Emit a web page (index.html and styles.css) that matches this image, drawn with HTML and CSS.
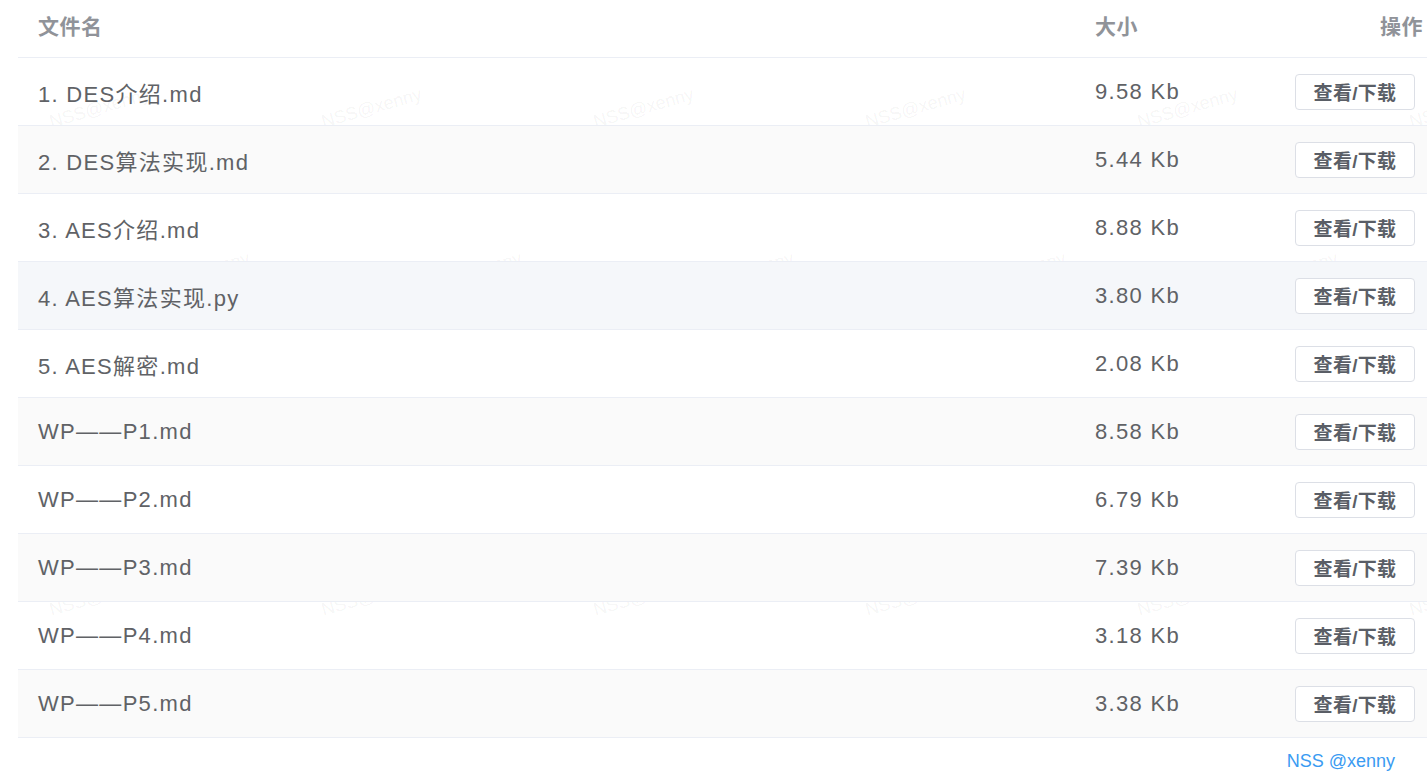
FILE: index.html
```html
<!DOCTYPE html>
<html lang="zh-CN">
<head>
<meta charset="utf-8">
<title>文件列表</title>
<link rel="stylesheet" href="styles.css">
</head>
<body>
<div class="page">
  <div class="watermarks" aria-hidden="true">
    <span class="wm" style="left:50px;top:112px">NSS@xenny</span>
    <span class="wm" style="left:322px;top:112px">NSS@xenny</span>
    <span class="wm" style="left:594px;top:112px">NSS@xenny</span>
    <span class="wm" style="left:866px;top:112px">NSS@xenny</span>
    <span class="wm" style="left:1138px;top:112px">NSS@xenny</span>
    <span class="wm" style="left:1410px;top:112px">NSS@xenny</span>
    <span class="wm" style="left:150px;top:276px">NSS@xenny</span>
    <span class="wm" style="left:422px;top:276px">NSS@xenny</span>
    <span class="wm" style="left:694px;top:276px">NSS@xenny</span>
    <span class="wm" style="left:966px;top:276px">NSS@xenny</span>
    <span class="wm" style="left:1238px;top:276px">NSS@xenny</span>
    <span class="wm" style="left:50px;top:600px">NSS@xenny</span>
    <span class="wm" style="left:322px;top:600px">NSS@xenny</span>
    <span class="wm" style="left:594px;top:600px">NSS@xenny</span>
    <span class="wm" style="left:866px;top:600px">NSS@xenny</span>
    <span class="wm" style="left:1138px;top:600px">NSS@xenny</span>
    <span class="wm" style="left:1410px;top:600px">NSS@xenny</span>
  </div>

  <div class="table">
    <div class="row head">
      <div class="cell">文件名</div>
      <div class="cell">大小</div>
      <div class="cell op-head">操作</div>
    </div>

    <div class="row">
      <div class="cell">1. DES介绍.md</div>
      <div class="cell">9.58 Kb</div>
      <div class="cell"><button class="btn">查看/下载</button></div>
    </div>
    <div class="row stripe">
      <div class="cell">2. DES算法实现.md</div>
      <div class="cell">5.44 Kb</div>
      <div class="cell"><button class="btn">查看/下载</button></div>
    </div>
    <div class="row">
      <div class="cell">3. AES介绍.md</div>
      <div class="cell">8.88 Kb</div>
      <div class="cell"><button class="btn">查看/下载</button></div>
    </div>
    <div class="row hover">
      <div class="cell">4. AES算法实现.py</div>
      <div class="cell">3.80 Kb</div>
      <div class="cell"><button class="btn">查看/下载</button></div>
    </div>
    <div class="row">
      <div class="cell">5. AES解密.md</div>
      <div class="cell">2.08 Kb</div>
      <div class="cell"><button class="btn">查看/下载</button></div>
    </div>
    <div class="row stripe">
      <div class="cell">WP——P1.md</div>
      <div class="cell">8.58 Kb</div>
      <div class="cell"><button class="btn">查看/下载</button></div>
    </div>
    <div class="row">
      <div class="cell">WP——P2.md</div>
      <div class="cell">6.79 Kb</div>
      <div class="cell"><button class="btn">查看/下载</button></div>
    </div>
    <div class="row stripe">
      <div class="cell">WP——P3.md</div>
      <div class="cell">7.39 Kb</div>
      <div class="cell"><button class="btn">查看/下载</button></div>
    </div>
    <div class="row">
      <div class="cell">WP——P4.md</div>
      <div class="cell">3.18 Kb</div>
      <div class="cell"><button class="btn">查看/下载</button></div>
    </div>
    <div class="row stripe">
      <div class="cell">WP——P5.md</div>
      <div class="cell">3.38 Kb</div>
      <div class="cell"><button class="btn">查看/下载</button></div>
    </div>
  </div>

  <div class="footer">NSS @xenny</div>
</div>
</body>
</html>
```

FILE: styles.css
```css
html, body {
  margin: 0;
  padding: 0;
  background: #ffffff;
}

body {
  font-family: "Liberation Sans", "Noto Sans CJK SC", sans-serif;
  overflow: hidden;
}

.page {
  position: relative;
  width: 1427px;
  height: 771px;
  padding-left: 18px;
  box-sizing: border-box;
}

.watermarks {
  position: absolute;
  inset: 0;
  z-index: 0;
  overflow: hidden;
  pointer-events: none;
}

.wm {
  position: absolute;
  font-family: "Liberation Sans", sans-serif;
  font-size: 18px;
  color: rgba(0, 0, 0, 0.05);
  white-space: nowrap;
  transform: rotate(-16deg);
  transform-origin: left center;
}

.table {
  position: relative;
  z-index: 1;
  width: 1409px;
  display: flex;
  flex-direction: column;
}

.row {
  display: grid;
  grid-template-columns: 1057px 200px 152px;
  height: 68px;
  border-bottom: 1px solid #ebeef5;
  box-sizing: border-box;
  color: #606266;
  font-size: 22px;
  letter-spacing: 1.3px;
}

.row.head {
  height: 58px;
  color: #909399;
  font-size: 21px;
  font-weight: bold;
  letter-spacing: 0.5px;
  background: transparent;
  padding-bottom: 8px;
}

.row.stripe {
  background: #fafafa;
}

.row.hover {
  background: #f5f7fa;
}

.cell {
  display: flex;
  align-items: center;
  padding-left: 20px;
  white-space: nowrap;
}

.cell.op-head {
  justify-content: flex-end;
  padding-left: 0;
  padding-right: 4px;
}

.btn {
  width: 120px;
  height: 36px;
  padding: 0;
  border: 1px solid #dcdfe6;
  border-radius: 4px;
  background: #ffffff;
  color: #5a5e66;
  font-family: "Liberation Sans", "Noto Sans CJK SC", sans-serif;
  font-size: 19px;
  font-weight: 600;
  letter-spacing: 0.3px;
  cursor: pointer;
}

.footer {
  display: flex;
  justify-content: flex-end;
  padding-right: 32px;
  padding-top: 12px;
  font-size: 18px;
  color: #3a9bf2;
  line-height: 22px;
}
```
